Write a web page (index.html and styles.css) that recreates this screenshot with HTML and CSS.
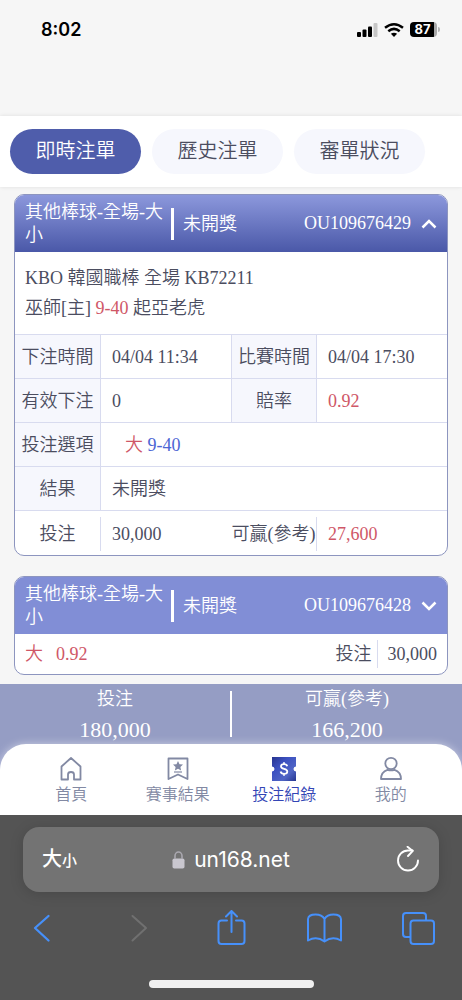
FILE: index.html
```html
<!DOCTYPE html>
<html lang="zh-Hant">
<head>
<meta charset="utf-8">
<meta name="viewport" content="width=device-width, initial-scale=1">
<title>投注紀錄</title>
<link rel="stylesheet" href="styles.css">
</head>
<body>
<header class="status">
  <span class="status-time">8:02</span>
  <div class="status-icons">
    <svg width="21" height="14" viewBox="0 0 21 14" aria-hidden="true"><rect x="0" y="9" width="4" height="5" rx="1"/><rect x="5.5" y="6.5" width="4" height="7.500" rx="1"/><rect x="11" y="3.500" width="4" height="10.500" rx="1"/><rect x="16.500" y="0" width="4" height="14" rx="1" fill="#c6c6c6"/></svg>
    <svg width="20" height="14" viewBox="0 0 20 14" fill="none" stroke="#000" stroke-width="2.500" aria-hidden="true"><path d="M1 4.800Q10-2.200 19 4.800"/><path d="M4.300 8.200Q10 3.600 15.700 8.200"/><path d="M10 14L6.900 10.800Q10 8.500 13.100 10.800Z" fill="#000" stroke="none"/></svg>
    <span class="battery"><span class="battery-level">87</span></span>
  </div>
</header>

<nav class="tabs">
  <button class="tab tab-active" type="button">即時注單</button>
  <button class="tab" type="button">歷史注單</button>
  <button class="tab" type="button">審單狀況</button>
</nav>

<main class="list">
  <article class="card">
    <button class="card-head card-head-open" type="button" aria-expanded="true">
      <span class="card-title">其他棒球-全場-大小</span>
      <span class="card-state">未開獎</span>
      <span class="card-id">OU109676429</span>
      <svg class="chevron" width="16" height="10" viewBox="0 0 16 10" aria-hidden="true"><path d="M1.500 8.500L8 2L14.500 8.500"/></svg>
    </button>
    <div class="match">
      <div>KBO 韓國職棒 全場 KB72211</div>
      <div>巫師[主] <span class="red">9-40</span> 起亞老虎</div>
    </div>
    <table class="details">
      <colgroup><col class="col-label"><col><col class="col-label"><col></colgroup>
      <tr><th scope="row">下注時間</th><td>04/04 11:34</td><th scope="row">比賽時間</th><td>04/04 17:30</td></tr>
      <tr><th scope="row">有效下注</th><td>0</td><th scope="row">賠率</th><td class="red">0.92</td></tr>
      <tr><th scope="row">投注選項</th><td class="pick" colspan="3"><span class="red">大</span> <span class="blue">9-40</span></td></tr>
      <tr><th scope="row">結果</th><td colspan="3">未開獎</td></tr>
      <tr class="sum-row"><th scope="row"><span class="rule">投注</span></th><td>30,000</td><th scope="row"><span class="rule">可贏(參考)</span></th><td class="red">27,600</td></tr>
    </table>
  </article>

  <article class="card">
    <button class="card-head" type="button" aria-expanded="false">
      <span class="card-title">其他棒球-全場-大小</span>
      <span class="card-state">未開獎</span>
      <span class="card-id">OU109676428</span>
      <svg class="chevron" width="16" height="10" viewBox="0 0 16 10" aria-hidden="true"><path d="M1.500 1.500L8 8L14.500 1.500"/></svg>
    </button>
    <div class="brief">
      <span class="red">大</span>
      <span class="red">0.92</span>
      <span class="brief-label">投注</span>
      <span class="brief-value">30,000</span>
    </div>
  </article>
</main>

<section class="dock">
  <div class="totals">
    <dl class="total"><dt>投注</dt><dd>180,000</dd></dl>
    <div class="totals-rule"></div>
    <dl class="total"><dt>可贏(參考)</dt><dd>166,200</dd></dl>
  </div>
  <nav class="menu">
    <a class="menu-item" href="#">
      <svg width="26" height="26" viewBox="0 0 26 26" fill="none" stroke="currentColor" stroke-width="1.800" stroke-linejoin="round" aria-hidden="true"><path d="M3.500 10.500L13 2L22.500 10.500V23.500H16V18.500Q16 16 13 16T10 18.500V23.500H3.500Z"/></svg>
      首頁</a>
    <a class="menu-item" href="#">
      <svg width="26" height="26" viewBox="0 0 26 26" fill="none" stroke="currentColor" stroke-width="1.800" stroke-linejoin="round" aria-hidden="true"><path d="M3.500 2.500H22.500V23L13 18.500L3.500 23Z"/><path d="M9 16H17" stroke-width="1.200"/><path d="M13 5L14.500 8.200L18 8.600L15.400 11L16.100 14.400L13 12.700L9.900 14.400L10.600 11L8 8.600L11.500 8.200Z" fill="currentColor" stroke="none"/></svg>
      賽事結果</a>
    <a class="menu-item menu-current" href="#" aria-current="page">
      <svg width="26" height="26" viewBox="0 0 26 26" aria-hidden="true"><defs><linearGradient id="ticket" x1="0" y1="0" x2="1" y2="1"><stop offset="0" stop-color="#27348f"/><stop offset=".35" stop-color="#3c51c1"/><stop offset=".7" stop-color="#5065c5"/><stop offset="1" stop-color="#25358f"/></linearGradient></defs><path d="M1 1H25V11A2 2 0 0 0 25 15V25H1V15A2 2 0 0 0 1 11Z" fill="url(#ticket)"/><path d="M1 11A2 2 0 0 1 1 15ZM25 11A2 2 0 0 0 25 15Z" fill="#fff" stroke="#fff"/><path d="M16.200 10.200C15.800 8.600 14.500 8.200 13 8.200C11.200 8.200 10 9 10 10.400C10 13.600 16.300 12 16.300 15.400C16.300 17 14.800 17.800 13 17.800C11.200 17.800 9.900 17.100 9.600 15.500M13 6.200V8.200M13 17.800V19.800" fill="none" stroke="#fff" stroke-width="1.800"/></svg>
      投注紀錄</a>
    <a class="menu-item" href="#">
      <svg width="26" height="26" viewBox="0 0 26 26" fill="none" stroke="currentColor" stroke-width="1.800" stroke-linejoin="round" aria-hidden="true"><circle cx="13" cy="7.500" r="5.700"/><path d="M3 23C3 17.800 6.500 14.800 9.500 13.800Q13 15 16.500 13.800C19.500 14.800 23 17.800 23 23Z"/></svg>
      我的</a>
  </nav>
</section>

<footer class="browser">
  <div class="address">
    <button class="text-size" type="button">大<small>小</small></button>
    <div class="site">
      <svg width="13" height="18" viewBox="0 0 13 18" aria-hidden="true"><rect x=".5" y="7.500" width="12" height="10" rx="1.800" fill="#c9c7cf"/><path d="M3 8V5A3.500 4 0 0 1 10 5V8" fill="none" stroke="#aaa8b0" stroke-width="1.600"/></svg>
      <span>un168.net</span>
    </div>
    <button class="reload" type="button" aria-label="重新載入"><svg width="24" height="28" viewBox="0 0 24 28" fill="none" stroke="#fff" stroke-width="1.900" stroke-linecap="round" stroke-linejoin="round"><path d="M16.600 4.500H12A10 10 0 1 0 22 14.500"/><path d="M11.500 0.800L16.800 4.900L12 10"/></svg></button>
  </div>
  <div class="toolbar">
    <button type="button" aria-label="上一頁"><svg width="36" height="36" viewBox="0 0 36 36"><path d="M25.500 6L12 18L25.500 30.500" stroke-width="2.300"/></svg></button>
    <button type="button" aria-label="下一頁" disabled><svg width="36" height="36" viewBox="0 0 36 36"><path d="M15.500 6L29 18L15.500 30.500" stroke-width="2"/></svg></button>
    <button type="button" aria-label="分享"><svg width="36" height="36" viewBox="0 0 36 36"><path d="M15 10.500H9.500Q6.500 10.500 6.500 13.500V31Q6.500 34 9.500 34H29.500Q32.500 34 32.500 31V13.500Q32.500 10.500 29.500 10.500H24M19.500 22V1.500M14 6.500L19.500 1L25 6.500"/></svg></button>
    <button type="button" aria-label="書籤"><svg width="36" height="36" viewBox="0 0 36 36"><path d="M18.500 31.500Q10.500 25.500 2 30.500V9Q2.500 4.500 9.500 4.500Q16 4.500 18.500 9Q21 4.500 27.500 4.500Q34.500 4.500 35 9V30.500Q26.500 25.500 18.500 31.500V9"/></svg></button>
    <button type="button" aria-label="分頁"><svg width="36" height="36" viewBox="0 0 36 36"><path d="M10 27H6Q3 27 3 24V6Q3 3 6 3H23Q26 3 26 6V10"/><rect x="10.500" y="10.500" width="23.500" height="23.500" rx="3"/></svg></button>
  </div>
  <div class="home-bar"></div>
</footer>
</body>
</html>
```

FILE: styles.css
```css
* { box-sizing: border-box; }

body {
  margin: 0;
  min-height: 100vh;
  display: flex;
  flex-direction: column;
  background: #f6f6f6;
  color: #4b4d5f;
  font: 350 18px/23px "Liberation Serif", "Noto Sans CJK TC", serif;
}

button {
  margin: 0;
  padding: 0;
  border: 0;
  background: none;
  color: inherit;
  font: inherit;
}

.red { color: #cf5767; }
.blue { color: #4c65d4; }

/* Status bar */
.status {
  height: 116px;
  padding: 18px 22px 0 41px;
  display: flex;
  justify-content: space-between;
  align-items: flex-start;
  color: #000;
  font-family: Inter, sans-serif;
}
.status-time { font-size: 18px; font-weight: 600; }
.status-icons {
  display: flex;
  align-items: center;
  gap: 6px;
  height: 23px;
}
.battery {
  display: flex;
  align-items: center;
  gap: 1px;
}
.battery::after {
  content: "";
  width: 2px;
  height: 5px;
  border-radius: 0 2px 2px 0;
  background: #b5b5b5;
}
.battery-level {
  width: 27px;
  padding-right: 2px;
  border-radius: 4px;
  background: linear-gradient(90deg, #000 90%, #a9a9a9 90%);
  color: #fff;
  font-size: 13px;
  font-weight: 700;
  line-height: 15px;
  text-align: center;
}

/* Tabs */
.tabs {
  display: flex;
  gap: 11px;
  padding: 13px 10px;
  background: #fff;
  box-shadow: 0 0 4px rgba(0, 0, 0, .1);
}
.tab {
  flex: 0 1 131px;
  border-radius: 23px;
  background: #f6f7fd;
  font-size: 20px;
  line-height: 45px;
}
.tab-active {
  background: #4f5dab;
  color: #fff;
}

/* Bet cards */
.list {
  flex: 1;
  display: flex;
  flex-direction: column;
  gap: 20px;
  padding: 7px 14px 8px;
}
.card {
  overflow: hidden;
  border: 1px solid #8d95bf;
  border-radius: 10px;
  background: #fff;
}
.card-head {
  width: 100%;
  min-height: 57px;
  padding: 5px 10px;
  display: flex;
  align-items: center;
  background: #818ed6;
  color: #fff;
  text-align: left;
}
.card-head-open { background: linear-gradient(#8c98dc, #4a58a8); }
.card-title { flex: 0 0 146px; padding-right: 6px; }
.card-state {
  padding-left: 9px;
  border-left: 3px solid #fff;
  line-height: 32px;
}
.card-id { margin-left: auto; }
.chevron {
  margin-left: 10px;
  fill: none;
  stroke: #fff;
  stroke-width: 2.5;
}
.match {
  padding: 11px 10px;
  line-height: 30px;
}

.details {
  width: 100%;
  table-layout: fixed;
  border-collapse: separate;
  border-spacing: 0;
}
.col-label { width: 86px; }
.details th,
.details td {
  height: 44px;
  padding: 2px 0 0;
  border-top: 1px solid #d8dbef;
}
.details th {
  border-right: 1px solid #d8dbef;
  background: #f6f7fd;
  font-weight: inherit;
  white-space: nowrap;
}
.details td + th { border-left: 1px solid #d8dbef; }
.details td { padding-left: 11px; }
.details .pick { padding-left: 24px; }
.details .sum-row th,
.details .sum-row td { height: 45px; }
.details .sum-row th {
  border-right: 0;
  border-left: 0;
  background: none;
}
.rule {
  display: block;
  border-right: 1px solid #d8dbef;
  line-height: 34px;
}

.brief {
  display: flex;
  align-items: center;
  gap: 13px;
  padding: 6px 10px;
}
.brief-label { margin-left: auto; }
.brief-value {
  margin-left: -8px;
  padding-left: 10px;
  border-left: 1px solid #d8dbef;
  line-height: 28px;
}

/* Totals and bottom menu */
.dock { background: linear-gradient(#959dc4 45%, #98a0cf); }
.totals {
  display: flex;
  padding-top: 7px;
  color: #fff;
  text-align: center;
}
.totals-rule {
  width: 2px;
  height: 46px;
  background: #fff;
}
.total {
  flex: 1;
  margin: 0;
  line-height: 16px;
}
.total dd {
  margin: 9px 0 0;
  font-size: 22px;
  line-height: 28px;
}
.menu {
  display: flex;
  padding: 12px 18px 8px;
  border-radius: 26px 26px 0 0;
  background: #fff;
  box-shadow: 0 0 8px rgba(255, 255, 255, .5);
}
.menu-item {
  flex: 1;
  display: flex;
  flex-direction: column;
  align-items: center;
  color: #8289a3;
  font-size: 16px;
  line-height: 25px;
  text-decoration: none;
}
.menu-current { color: #3345b5; }

/* Browser chrome */
.browser {
  padding: 12px 23px;
  background: #545454;
  color: #fff;
  font-family: Inter, "Noto Sans CJK TC", sans-serif;
}
.address {
  height: 65px;
  padding: 0 19px;
  display: grid;
  grid-template-columns: 1fr auto 1fr;
  align-items: center;
  border-radius: 16px;
  background: #737373;
  box-shadow: 0 2px 14px rgba(0, 0, 0, .15);
}
.text-size {
  justify-self: start;
  font-size: 20px;
  font-weight: 500;
}
.text-size small { font-size: 15px; }
.site {
  display: flex;
  align-items: center;
  gap: 9px;
  font-size: 21px;
  font-weight: 400;
}
.reload { justify-self: end; }
.reload svg { display: block; }
.toolbar {
  display: flex;
  justify-content: space-between;
  padding: 18px 3px 34px 0;
}
.toolbar svg {
  display: block;
  fill: none;
  stroke: #4690fa;
  stroke-width: 2;
  stroke-linecap: round;
  stroke-linejoin: round;
}
.toolbar button:disabled svg { stroke: #707070; }
.home-bar {
  width: 165px;
  height: 8px;
  margin: 0 auto;
  border-radius: 4px;
  background: #f0f0f0;
}
```
